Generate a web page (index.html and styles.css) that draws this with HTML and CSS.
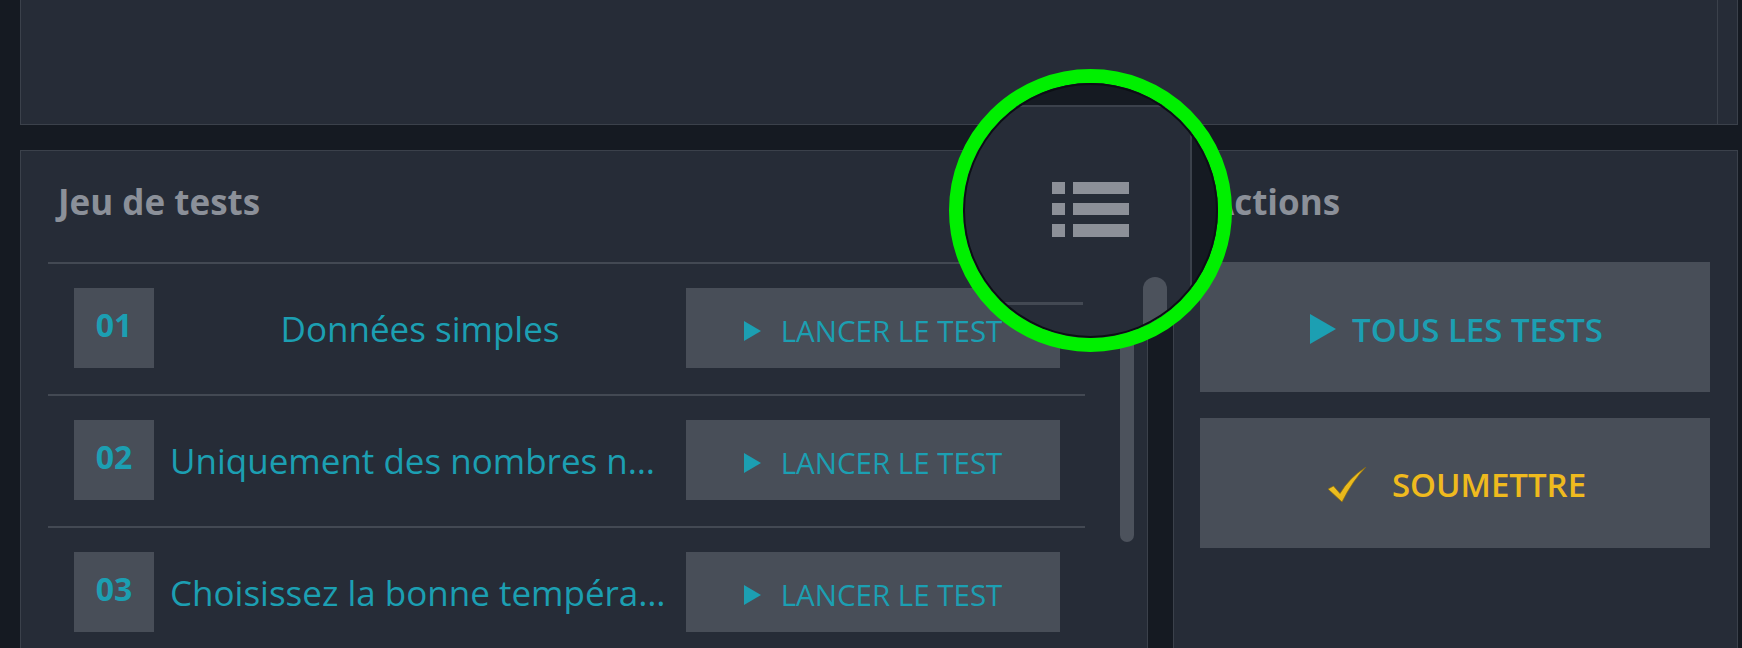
FILE: index.html
```html
<!DOCTYPE html>
<html lang="fr">
<head>
<meta charset="utf-8">
<title>Jeu de tests</title>
<link rel="stylesheet" href="styles.css">
</head>
<body>
<div class="page">
  <section class="top-panel">
    <div class="top-body"></div>
    <div class="top-track"></div>
  </section>

  <div class="bottom">
    <section class="panel tests">
      <header class="panel-head">
        <h2 class="panel-title">Jeu de tests</h2>
        <svg class="list-icon" viewBox="0 0 45 32" width="45" height="32" aria-hidden="true">
          <rect x="0" y="0" width="8" height="7"/><rect x="12" y="0" width="33" height="7"/>
          <rect x="0" y="12.5" width="8" height="7"/><rect x="12" y="12.5" width="33" height="7"/>
          <rect x="0" y="25" width="8" height="7"/><rect x="12" y="25" width="33" height="7"/>
        </svg>
      </header>
      <div class="tests-body">
        <ul class="test-list">
          <li class="test-row">
            <span class="badge">01</span>
            <span class="test-name">Données simples</span>
            <button class="run-btn"><svg class="play" viewBox="0 0 17 20" width="17" height="20"><polygon points="0,0 17,10 0,20"/></svg><span>LANCER LE TEST</span></button>
          </li>
          <li class="test-row">
            <span class="badge">02</span>
            <span class="test-name">Uniquement des nombres négatifs</span>
            <button class="run-btn"><svg class="play" viewBox="0 0 17 20" width="17" height="20"><polygon points="0,0 17,10 0,20"/></svg><span>LANCER LE TEST</span></button>
          </li>
          <li class="test-row">
            <span class="badge">03</span>
            <span class="test-name">Choisissez la bonne température</span>
            <button class="run-btn"><svg class="play" viewBox="0 0 17 20" width="17" height="20"><polygon points="0,0 17,10 0,20"/></svg><span>LANCER LE TEST</span></button>
          </li>
        </ul>
        <div class="scroll-track"><div class="scroll-thumb"></div></div>
      </div>
    </section>

    <section class="panel actions">
      <header class="panel-head">
        <h2 class="panel-title">Actions</h2>
      </header>
      <button class="action-btn all">
        <svg class="play-lg" viewBox="0 0 26 30" width="26" height="30"><polygon points="0,0 26,15 0,30"/></svg>
        <span>TOUS LES TESTS</span>
      </button>
      <button class="action-btn submit">
        <svg class="check" viewBox="0 0 38 36" width="38" height="36">
          <defs>
            <linearGradient id="chk" x1="0" y1="0" x2="1" y2="1">
              <stop offset="0" stop-color="#f6cf2a"/>
              <stop offset="1" stop-color="#e0a812"/>
            </linearGradient>
          </defs>
          <path d="M0 22 L5.5 19 L12 26.5 Q21 11 38 0 Q25 13 14 35 Z" fill="url(#chk)" stroke="#8a6a10" stroke-width="0.7"/>
        </svg>
        <span>SOUMETTRE</span>
      </button>
    </section>
  </div>

  <div class="magnifier" aria-hidden="true">
    <div class="mg-gap"></div>
    <div class="mg-side"></div>
    <svg class="mg-icon" viewBox="0 0 77 55" width="77" height="55">
      <rect x="0" y="0" width="13" height="12"/><rect x="21" y="0" width="56" height="12"/>
      <rect x="0" y="21" width="13" height="12"/><rect x="21" y="21" width="56" height="12"/>
      <rect x="0" y="42" width="13" height="13"/><rect x="21" y="42" width="56" height="13"/>
    </svg>
    <div class="mg-sep"></div>
    <div class="mg-thumb"></div>
    <div class="mg-ring"></div>
  </div>
</div>
</body>
</html>
```

FILE: styles.css
```css
* {
  box-sizing: border-box;
  margin: 0;
  padding: 0;
}

html,
body {
  width: 1742px;
  height: 648px;
  overflow: hidden;
  background: #151a22;
}

body {
  font-family: "Open Sans", "Noto Sans", sans-serif;
}

.page {
  position: relative;
  height: 648px;
  overflow: hidden;
  padding: 0 4px 0 20px;
}

/* top panel */
.top-panel {
  display: flex;
  height: 125px;
  background: #262c37;
  border: 1px solid #3b414b;
  border-top: 0;
}

.top-body {
  flex: 1;
}

.top-track {
  width: 20px;
  border-left: 1px solid #3b414b;
}

/* bottom panels */
.bottom {
  display: flex;
  gap: 25px;
  margin-top: 25px;
}

.panel {
  background: #262c37;
  border: 1px solid #3b414b;
  height: 520px;
}

.tests {
  width: 1128px;
  flex: none;
  padding: 26px 13px 0 27px;
}

.actions {
  flex: 1;
  padding: 26px 27px 0 26px;
}

.panel-head {
  height: 85px;
  display: flex;
  justify-content: space-between;
  align-items: flex-start;
}

.panel-title {
  font-size: 35px;
  font-weight: 700;
  line-height: 48px;
  color: #8b9099;
  padding: 1px 0 0 10px;
}

.list-icon {
  margin: 16px 21px 0 0;
  fill: #8c9098;
}

/* test list */
.tests-body {
  display: flex;
}

.test-list {
  list-style: none;
  width: 1037px;
  flex: none;
}

.test-row {
  display: flex;
  align-items: center;
  border-top: 2px solid #434953;
  padding: 24px 25px 26px 26px;
}

.badge {
  flex: none;
  width: 80px;
  height: 80px;
  background: #484e58;
  color: #1c9fb2;
  font-size: 32px;
  font-weight: 700;
  display: flex;
  align-items: center;
  justify-content: center;
  padding-bottom: 8px;
}

.test-name {
  flex: none;
  width: 500px;
  margin: 0 16px;
  font-size: 35px;
  color: #1c9fb2;
  text-align: center;
  white-space: nowrap;
  overflow: hidden;
  text-overflow: ellipsis;
}

.run-btn {
  flex: none;
  width: 374px;
  height: 80px;
  background: #484e58;
  border: 0;
  display: flex;
  align-items: center;
  justify-content: center;
  gap: 20px;
  color: #1c9fb2;
  font-family: "Open Sans", "Noto Sans", sans-serif;
  font-size: 29.5px;
  font-weight: 400;
  padding-top: 5px;
}

.play,
.play-lg {
  fill: currentColor;
  flex: none;
}

.scroll-track {
  flex: none;
  width: 14px;
  margin-left: 35px;
}

.scroll-thumb {
  width: 14px;
  height: 280px;
  border-radius: 7px;
  background: #4c525c;
}

/* actions */
.action-btn {
  width: 100%;
  height: 130px;
  margin-bottom: 26px;
  background: #484e58;
  border: 0;
  display: flex;
  align-items: center;
  justify-content: center;
  font-family: "Open Sans", "Noto Sans", sans-serif;
  font-size: 33px;
  font-weight: 600;
}

.action-btn.all {
  color: #1c9fb2;
  gap: 16px;
  padding: 4px 0 0 3px;
}

.action-btn.submit {
  color: #efba1e;
  gap: 26px;
  padding: 3px 0 0 4px;
}

.check {
  flex: none;
}

/* magnifier overlay */
.magnifier {
  position: absolute;
  left: 949px;
  top: 69px;
  width: 283px;
  height: 283px;
  border-radius: 50%;
  border: 14px solid #00f000;
  overflow: hidden;
  background: #262c37;
}

.mg-gap {
  position: absolute;
  left: 0;
  top: 0;
  width: 100%;
  height: 24px;
  background: #151a22;
  border-bottom: 2px solid #3b414b;
}

.mg-side {
  position: absolute;
  left: 227px;
  top: 22px;
  right: 0;
  bottom: 0;
  background: #151a22;
  border-left: 2px solid #3b414b;
}

.mg-icon {
  position: absolute;
  left: 89px;
  top: 99px;
  fill: #8c9098;
}

.mg-sep {
  position: absolute;
  left: 0;
  top: 219px;
  width: 120px;
  height: 3px;
  background: #434953;
}

.mg-thumb {
  position: absolute;
  left: 180px;
  top: 194px;
  width: 24px;
  height: 140px;
  border-radius: 12px;
  background: #4c525c;
}

.mg-ring {
  position: absolute;
  inset: 0;
  border-radius: 50%;
  box-shadow: inset 0 0 0 2px #0c0f14;
}
```
